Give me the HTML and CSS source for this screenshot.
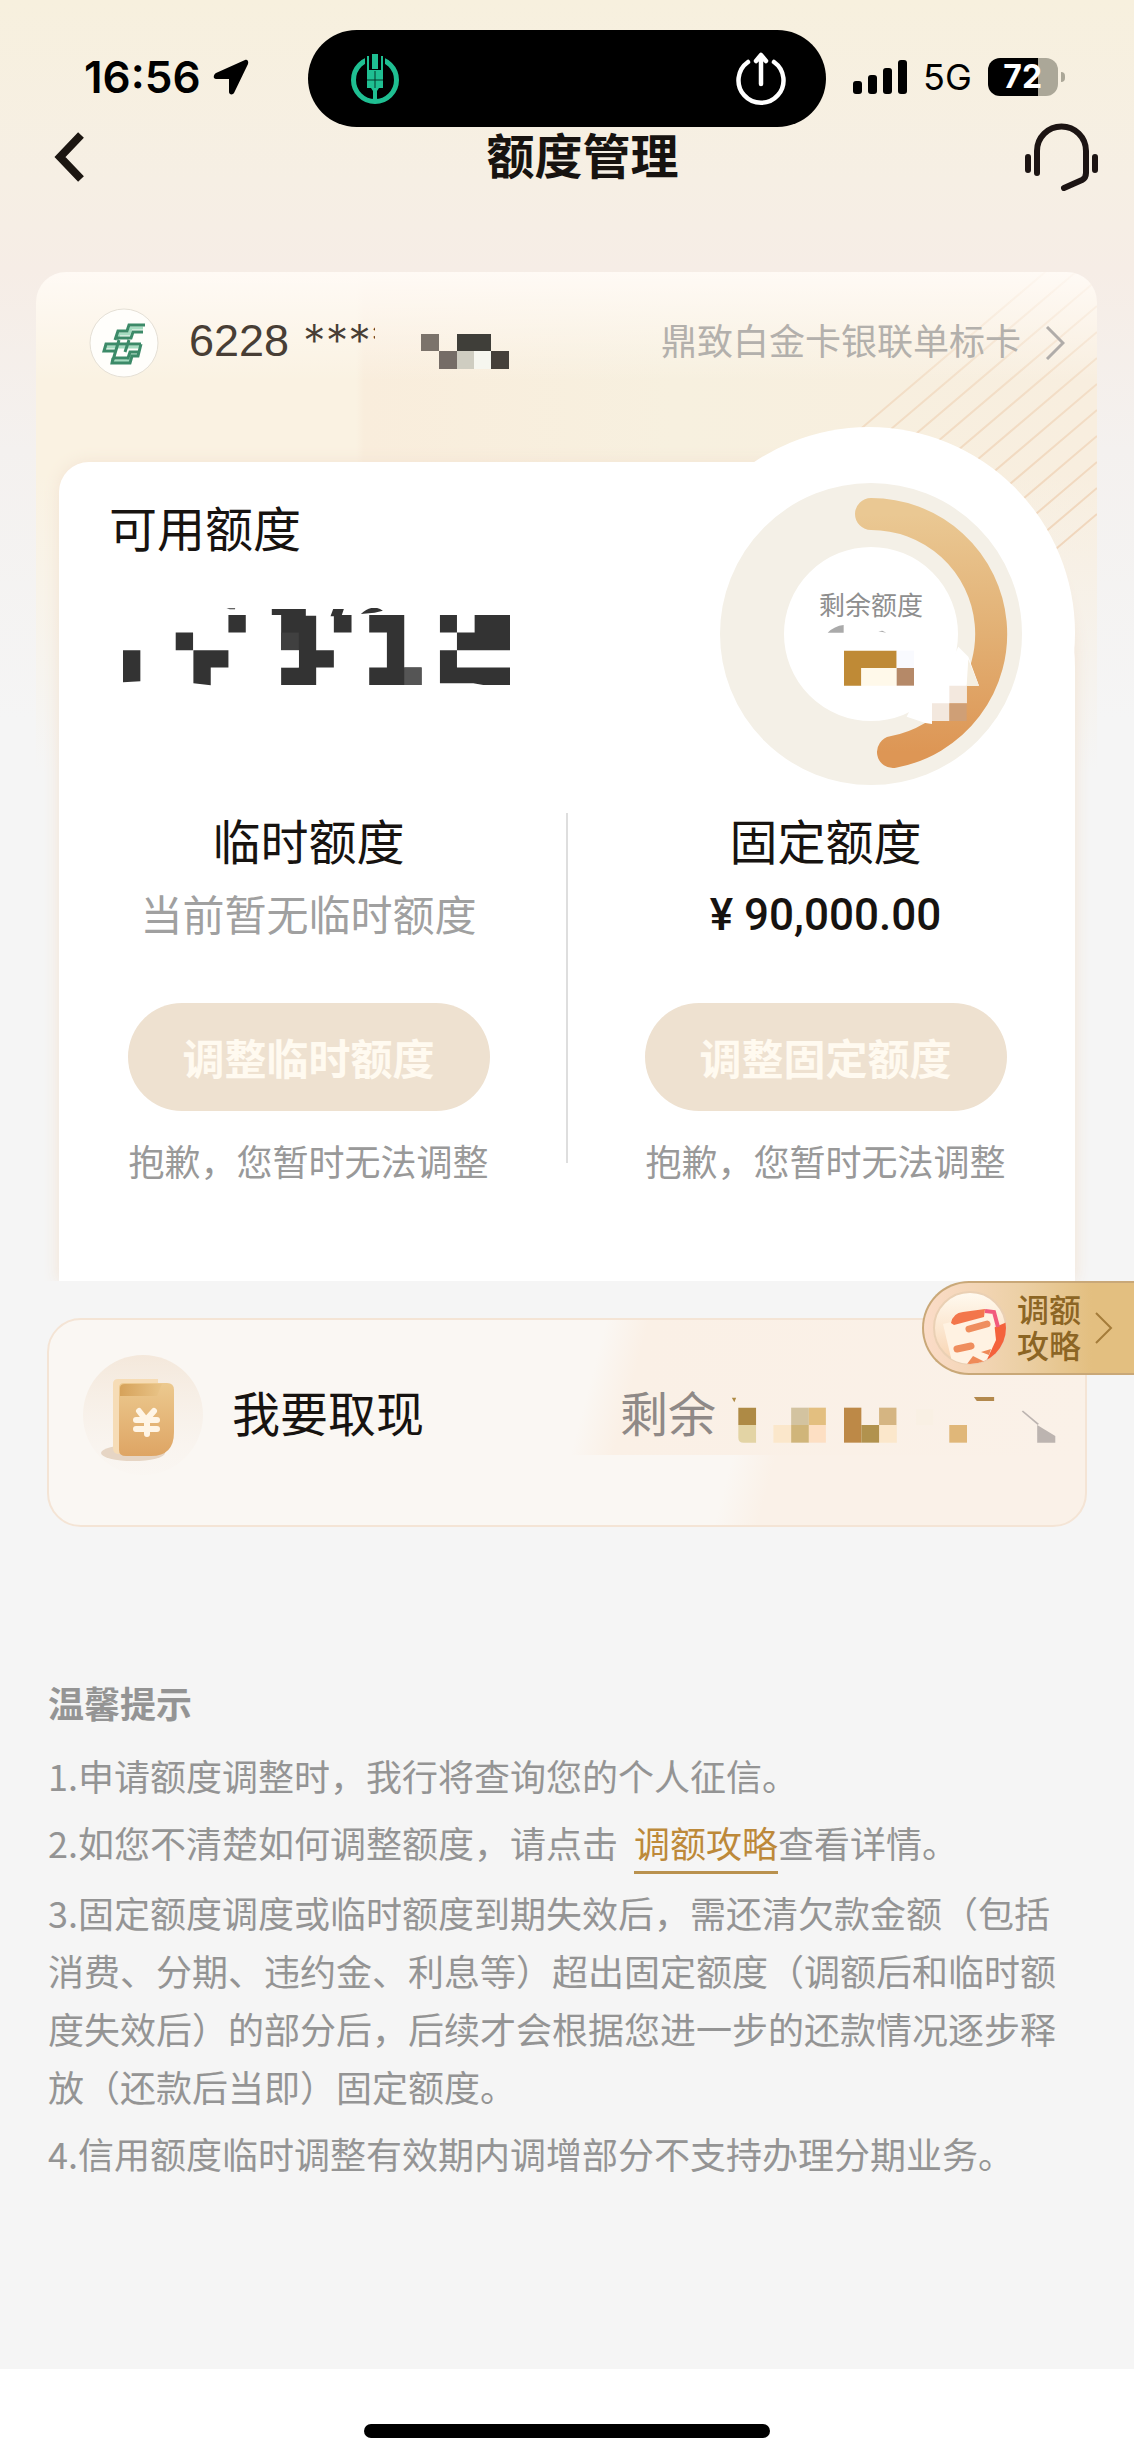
FILE: index.html
```html
<!DOCTYPE html>
<html lang="zh-CN">
<head>
<meta charset="utf-8">
<meta name="viewport" content="width=device-width, initial-scale=1">
<title>额度管理</title>
<link rel="stylesheet" href="styles.css">
</head>
<body>
<div class="status-bar">
  <div class="status-left">
    <span class="clock">16:56</span>
    <svg width="36" height="36" viewBox="0 0 36 36" aria-hidden="true"><path d="M32 1C34 0 36 2 35 5L21 34C20 36 16 36 16 33V20H3C0 20 0 16 3 14Z" fill="#000"/></svg>
  </div>
  <div class="island">
    <svg width="50" height="50" viewBox="0 0 50 50" aria-hidden="true">
      <circle cx="25" cy="26" r="21.500" fill="none" stroke="#1fbf92" stroke-width="5"/>
      <path d="M15 0h20v11H15z" fill="#000"/>
      <path d="M22 0h6v15h-6zM17 2h2v14h12V2h2v22H17zM17 27h16v7h-4l-2 3v10h-4V37l-2-3h-4z" fill="#1fbf92"/>
      <path d="M17 23h16v5H17z" fill="#1fbf92"/>
      <path d="M25 17v17M17 26h16" stroke="#04382a" stroke-width="1"/>
    </svg>
    <svg width="50" height="54" viewBox="0 0 50 54" fill="none" stroke="#fff" stroke-width="4.500" stroke-linecap="round" stroke-linejoin="round" aria-hidden="true">
      <path d="M12 10A22.500 22.500 0 1 0 38 10M25 32V4M20 9l5-6 5 6"/>
    </svg>
  </div>
  <div class="status-right">
    <svg width="54" height="34" viewBox="0 0 54 34" aria-hidden="true"><rect y="21" width="9" height="13" rx="3"/><rect x="15" y="15" width="9" height="19" rx="3"/><rect x="30" y="8" width="9" height="26" rx="3"/><rect x="45" width="9" height="34" rx="3"/></svg>
    <span class="network">5G</span>
    <span class="battery"><span class="battery-level">72</span></span>
  </div>
</div>

<header class="nav">
  <button class="nav-back" type="button" aria-label="返回">
    <svg width="30" height="50" viewBox="0 0 30 50" fill="none" stroke="#1c1611" stroke-width="8"><path d="M27 3L6 25l21 22"/></svg>
  </button>
  <h1 class="nav-title">额度管理</h1>
  <button class="nav-service" type="button" aria-label="客服">
    <svg width="73" height="68" viewBox="0 0 73 68" fill="none" stroke="#1c1413" stroke-width="6" stroke-linecap="round" stroke-linejoin="round"><path d="M12 50V28a24 24 0 0 1 49 0V50q0 5-4 7L39 65M3 34v13M70 34v13"/></svg>
  </button>
</header>

<main class="content">
  <section class="quota-card">
    <svg class="card-lines" width="280" height="300" viewBox="0 0 280 300" aria-hidden="true">
      <defs><linearGradient id="fade" x1="0" y1="0" x2="0" y2="300" gradientUnits="userSpaceOnUse"><stop offset="0" stop-color="#ecc9a8" stop-opacity=".05"/><stop offset=".4" stop-color="#ecc9a8" stop-opacity=".45"/><stop offset="1" stop-color="#ecc9a8" stop-opacity=".7"/></linearGradient></defs>
      <path d="M280-44L0 194M280-18L0 220M280 8L0 246M280 34L0 272M280 60L0 298M280 86L0 324M280 112L0 350M280 138L0 376M280 164L0 402M280 190L0 428M280 216L0 454M280 242L0 480" fill="none" stroke="url(#fade)" stroke-width="2"/>
    </svg>
    <div class="card-head">
      <svg width="70" height="70" viewBox="0 0 70 70" aria-hidden="true">
        <circle cx="35" cy="35" r="34" fill="#fffefb" stroke="#e5e0d6"/>
        <g fill="none" stroke="#a5dcc0" stroke-width="3">
          <path d="M54 20H42l-2 6H30l-2 6M51 39H17M48 47h-7l-2 6H24"/>
        </g>
        <g fill="none" stroke="#3c8a68" stroke-width="3">
          <path d="M56 17H40l-2 6H29l-3 9M54 24H44l-2 6H28M52 36H17l-2 7h12M30 32l-6 20M40 32l-4 12M52 36l-2 8h-9l-2 6H24M50 44l-1 4h-6l-2 7H23l1-5"/>
        </g>
      </svg>
      <p class="card-number">6228 <span class="stars">****</span></p>
      <svg class="number-mosaic" width="88" height="35" viewBox="0 0 88 35" aria-hidden="true"><path d="M0 0h18v17H0z" fill="#7b736b"/><path d="M18 17h18v18H18z" fill="#756c66"/><path d="M36 0h34v17H36z" fill="#3f3e39"/><path d="M36 17h17v18H36z" fill="#cfcdc1"/><path d="M53 17h17v18H53z" fill="#f6f6ef"/><path d="M70 17h18v18H70z" fill="#45403a"/></svg>
      <a class="product" href="#card"><span class="product-name">鼎致白金卡银联单标卡</span>
        <svg width="20" height="34" viewBox="0 0 20 34" fill="none" stroke="#b0aca9" stroke-width="3" aria-hidden="true"><path d="M2 1l16 16L2 33"/></svg>
      </a>
    </div>

    <div class="panel">
      <div class="overview">
        <div>
          <h2 class="quota-title">可用额度</h2>
          <svg class="amount-mosaic" width="387" height="78" viewBox="190 385 1160 235" preserveAspectRatio="none" role="img" aria-label="金额已遮挡">
            <path fill="#333" d="M190 512h52v94l-52 3zM348 459h52v53h106v52h-53v54l-52-6V512h-53zM506 406h52v53h-52zM500 386h26v3h-16zM636 388h102v20h31v104h53v52h-53v53H664v-53h53v-52h-53V406h-28zM820 388h32l-6 18h29v53h-53v-49h-10zM903 403q35-32 66-10l-25 6zM928 406h105v158h52v53H928v-53h53V459h-53zM1140 406h51v53h53v-53h106v106h-159v52h159v53h-80l-30-5h-100V512h51v-53h-51z"/>
            <path fill="#fff" d="M664 512h53v52h-53z"/>
            <path fill="#555" d="M1033 564h52v53h-52z"/><path fill="#404040" d="M664 459h53v53h-53z"/>
          </svg>
        </div>
        <figure class="donut">
          <svg width="302" height="302" viewBox="0 0 302 302" aria-hidden="true">
            <defs><linearGradient id="arc" x1="0" y1="0" x2="0" y2="1"><stop offset="0" stop-color="#eac893"/><stop offset=".5" stop-color="#e2b074"/><stop offset="1" stop-color="#dd9655"/></linearGradient></defs>
            <circle cx="151" cy="151" r="119" fill="none" stroke="#f4f0e7" stroke-width="64"/>
            <path d="M151 31A120 120 0 0 1 173 269" fill="none" stroke="url(#arc)" stroke-width="32" stroke-linecap="round"/>
            <g transform="translate(-40 -63) scale(.33333)">
              <path fill="#fff" d="M835 680l30 30 32 87h-37v53h-52v53h-52v9l-20-3-56-19 20-40 100-100z"/>
              <path fill="#f5efe2" d="M865 718l32 79h-37z"/><path fill="#f3e8de" d="M808 797h52v53h-52zM756 850h52v53h-52z"/><path fill="#cf9f76" d="M808 850h52v53h-52z"/>
              <path fill="#bf8a36" d="M492 692h158v52H544v53h-52z"/><path fill="#fff9ea" d="M544 744h106v53H544z"/><path fill="#f9fafe" d="M650 692h52v52h-52z"/><path fill="#b58968" d="M650 744h52v53h-52z"/>
              <path fill="#aaa" d="M443 638q20-20 48-23v23zM595 634l24 4-12-6z"/>
            </g>
          </svg>
          <figcaption>剩余额度</figcaption>
        </figure>
      </div>

      <div class="limits">
        <section class="limit">
          <h2 class="quota-title">临时额度</h2>
          <p class="limit-empty">当前暂无临时额度</p>
          <button class="adjust" type="button" disabled>调整临时额度</button>
          <p class="limit-note">抱歉，您暂时无法调整</p>
        </section>
        <div class="divider"></div>
        <section class="limit">
          <h2 class="quota-title">固定额度</h2>
          <p class="limit-amount">¥ 90,000.00</p>
          <button class="adjust" type="button" disabled>调整固定额度</button>
          <p class="limit-note">抱歉，您暂时无法调整</p>
        </section>
      </div>
    </div>
  </section>

  <section class="withdraw-area">
    <a class="withdraw" href="#withdraw">
      <svg width="120" height="120" viewBox="0 0 120 120" aria-hidden="true">
        <defs>
          <linearGradient id="halo" x1="0" y1="0" x2="0" y2="1"><stop offset="0" stop-color="#f4e8db"/><stop offset="1" stop-color="#f9f4ef" stop-opacity=".3"/></linearGradient>
          <linearGradient id="gold" x1="0" y1="0" x2="0" y2="1"><stop offset="0" stop-color="#ecc98f"/><stop offset="1" stop-color="#dea564"/></linearGradient>
          <linearGradient id="flap"><stop offset="0" stop-color="#d6a25a"/><stop offset="1" stop-color="#e9c488"/></linearGradient>
        </defs>
        <circle cx="60" cy="60" r="60" fill="url(#halo)"/>
        <ellipse cx="50" cy="98" rx="32" ry="8" fill="#e6d5c4"/>
        <path d="M30 29q0-5 5-5h40v75H36q-6 0-6-6z" fill="#f6dcb6"/>
        <path d="M36 33q0-5 5-5h43q7 0 7 7v42q0 24-23 24H43q-7 0-7-6z" fill="url(#gold)"/>
        <path d="M37 33q0-4 5-4h37l-5 12H37z" fill="url(#flap)"/>
        <path d="M56 56l7 9 8-9M53 65h21M53 74h21M64 65v14" fill="none" stroke="#fff5e6" stroke-width="6" stroke-linecap="round"/>
      </svg>
      <span class="withdraw-label">我要取现</span>
      <span class="withdraw-rest"><span class="rest-label">剩余</span>
        <svg width="330" height="60" viewBox="451 432 912 180" preserveAspectRatio="none" aria-hidden="true">
          <path fill="#ae8a45" d="M474 500h49v52h-49zM456 470h12l-5 14z"/><path fill="#e3d4a5" d="M474 552h49v53h-34q-15 0-15-15z"/>
          <path fill="#fbe7cb" d="M571 552h49v53h-49zM863 552h49v53h-49z"/><path fill="#d3c3a0" d="M620 500h49v52h-49z"/><path fill="#d0b57a" d="M620 552h49v53h-49z"/><path fill="#e3bf80" d="M669 500h47v52h-47z"/><path fill="#fddfc3" d="M669 552h47v53h-47z"/>
          <path fill="#bd8947" d="M766 500h48v105h-48z"/><path fill="#b1924e" d="M814 552h49v53h-49z"/><path fill="#d5b582" d="M863 500h48v52h-48z"/><path fill="#f9f0e4" d="M965 505h48v47h-48z"/><path fill="#e0b779" d="M1057 552h49v53h-49z"/>
          <path fill="#b3894d" d="M1125 468h56v12h-48z"/><path fill="#bcb4b0" d="M1300 552l50 33v20h-50z"/><path d="M1259 510l44 40" stroke="#bcb4b0" stroke-width="5"/>
        </svg>
      </span>
    </a>
    <a class="guide-tab" href="#guide">
      <svg width="74" height="76" viewBox="0 0 74 76" aria-hidden="true">
        <defs><clipPath id="disc"><circle cx="37" cy="38" r="36"/></clipPath><linearGradient id="discfill" x1="0" y1="0" x2="0" y2="1"><stop offset="0" stop-color="#fffaf0"/><stop offset="1" stop-color="#f8d3b0"/></linearGradient></defs>
        <circle cx="37" cy="38" r="36" fill="url(#discfill)" stroke="#ead0b4" stroke-width="2"/>
        <g clip-path="url(#disc)">
          <path d="M60 38l14-6v24L58 76H46z" fill="#f4623c"/>
          <path d="M10 34l50-12 3 28-12 26H20z" fill="#fff2e2"/>
          <path d="M18 33q2-10 12-11l22-3-1 8-30 8z" fill="#f3764b"/>
          <path d="M52 21l9 1 4 15" fill="none" stroke="#f2597d" stroke-width="4"/>
          <path d="M36 39l18-5M24 59l14-3" stroke="#ef8e5e" stroke-width="7" stroke-linecap="round"/>
          <path d="M34 74l6-8 16 8zM48 62l10-3-2 6z" fill="#ef8a58"/>
        </g>
      </svg>
      <span class="guide-text">调额<br>攻略</span>
      <svg width="18" height="32" viewBox="0 0 18 32" fill="none" stroke="#a47c3a" stroke-width="2" aria-hidden="true"><path d="M1 1l15 15L1 31"/></svg>
    </a>
  </section>

  <section class="tips">
    <h2 class="tips-title">温馨提示</h2>
    <p>1.申请额度调整时，我行将查询您的个人征信。</p>
    <p>2.如您不清楚如何调整额度，请点击 <a class="tips-link" href="#guide">调额攻略</a>查看详情。</p>
    <p>3.固定额度调度或临时额度到期失效后，需还清欠款金额（包括消费、分期、违约金、利息等）超出固定额度（调额后和临时额度失效后）的部分后，后续才会根据您进一步的还款情况逐步释放（还款后当即）固定额度。</p>
    <p>4.信用额度临时调整有效期内调增部分不支持办理分期业务。</p>
  </section>
</main>

<footer class="home-area"><div class="home-bar"></div></footer>
</body>
</html>
```
FILE: styles.css
```css
* { box-sizing: border-box; }

body {
  margin: 0;
  min-height: 100vh;
  display: flex;
  flex-direction: column;
  font-family: "Noto Sans CJK SC", sans-serif;
  font-size: 36px;
  line-height: 58px;
  color: #171310;
  background: linear-gradient(#f7f0de 0, #f6efe4 180px, #f6ede6 270px, #f4f1ef 450px, #f5f5f5 720px);
}

h1, h2, p, figure { margin: 0; font-weight: 400; }
button { border: 0; padding: 0; background: none; font: inherit; color: inherit; }
a { color: inherit; text-decoration: none; }
svg { display: block; flex: none; }

/* Phone status bar */
.status-bar {
  display: grid;
  grid-template-columns: 1fr 518px 1fr;
  align-items: center;
  padding-top: 30px;
  font-family: Inter, sans-serif;
  color: #000;
}
.status-left { display: flex; align-items: center; gap: 12px; padding-left: 84px; }
.clock { font-size: 44px; font-weight: 600; }
.island {
  display: flex;
  align-items: center;
  justify-content: space-between;
  height: 97px;
  padding: 0 40px 0 42px;
  border-radius: 49px;
  background: #000;
}
.status-left, .status-right { padding-bottom: 3px; }
.status-right { display: flex; align-items: center; gap: 16px; padding-left: 27px; }
.network { font-size: 36px; }
.battery { position: relative; }
.battery::after {
  content: "";
  position: absolute;
  right: -7px;
  top: 14px;
  width: 4px;
  height: 10px;
  border-radius: 0 4px 4px 0;
  background: #aba798;
}
.battery-level {
  display: block;
  width: 70px;
  border-radius: 12px;
  background: linear-gradient(90deg, #000 72%, #aba798 72%);
  color: #fff;
  font-size: 32px;
  font-weight: 700;
  line-height: 38px;
  text-align: center;
}

/* Title bar */
.nav { display: flex; align-items: center; height: 60px; padding: 0 36px 0 54px; }
.nav-back { width: 86px; }
.nav-title { flex: 1; padding-bottom: 8px; font-size: 48px; font-weight: 700; text-align: center; }

.content { flex: 1; background: linear-gradient(#f5f5f500 500px, #f5f5f5 600px); }

/* Card with the quota panel */
.quota-card {
  position: relative;
  margin: 85px 37px 0 36px;
  border-radius: 30px 30px 0 0;
  background:
    linear-gradient(#f5f5f500 200px, #f5f5f5 500px),
    linear-gradient(#fffaf5 0, #fffaf500 110px),
    linear-gradient(90deg, #faf2e2 320px, #f9eddc 328px, #f7f0df 60%, #f8eedf);
}
.card-lines { position: absolute; top: 0; right: 0; border-radius: 0 30px 0 0; }
.card-head { position: relative; display: flex; align-items: center; padding: 36px 32px 0 53px; }
.card-number {
  display: flex;
  margin-left: 30px;
  padding-bottom: 4px;
  font-family: "Liberation Sans", sans-serif;
  font-size: 45px;
  color: #483e35;
}
.stars { width: 72px; margin-left: 14px; overflow: hidden; font-family: Inter, sans-serif; font-weight: 300; }
.number-mosaic { margin: 16px 0 0 46px; }
.product { display: flex; align-items: center; gap: 24px; margin-left: auto; color: #b3b0ac; }
.product-name { padding-bottom: 8px; }

.panel {
  position: relative;
  margin: 84px 22px 0 23px;
  padding: 21px 0 99px;
  border-radius: 30px 206px 0 0;
  background: #fff;
  box-shadow: 0 0 16px #f3e3d3;
  clip-path: inset(-60px -22px 0 -23px);
}
.panel::before {
  content: "";
  position: absolute;
  top: -35px;
  right: 0;
  width: 412px;
  height: 412px;
  border-radius: 50%;
  background: #fff;
}
.overview { position: relative; display: flex; justify-content: space-between; padding: 0 53px 0 50px; }
.quota-title { font-size: 48px; }
.overview .quota-title { margin-top: 14px; }
.amount-mosaic { margin: 53px 0 0 14px; }
.donut { display: grid; place-items: center; }
.donut > * { grid-area: 1 / 1; }
.donut figcaption { padding-bottom: 60px; font-size: 26px; line-height: 32px; color: #8e8e8e; }

.limits { position: relative; display: grid; grid-template-columns: 1fr 18px 1fr; margin-top: 28px; }
.divider { justify-self: center; width: 2px; margin-bottom: 19px; background: #dedede; }
.limit { display: flex; flex-direction: column; align-items: center; }
.limit .quota-title { margin-top: -3px; }
.limit-empty, .limit-amount { margin-top: 16px; font-size: 42px; }
.limit-empty { color: #a0a0a0; }
.limit-amount { padding-top: 4px; line-height: 54px; font-family: Roboto, sans-serif; font-size: 44px; font-weight: 500; }
.adjust {
  width: 362px;
  height: 108px;
  margin: 61px 0 27px;
  border-radius: 54px;
  background: #eee1d0;
  color: #fffaf0;
  font-size: 42px;
  font-weight: 700;
}
.limit-note { line-height: 44px; color: #999; }

/* Cash withdrawal */
.withdraw-area { position: relative; padding: 37px 47px 0; background: #f5f5f5; }
.withdraw {
  display: flex;
  align-items: center;
  padding: 35px 25px 50px 34px;
  border: 2px solid #f4e4d5;
  border-radius: 34px;
  background:
    linear-gradient(105deg, #f8f0e800 52%, #faf0e6 56%, #faf1e8 100%) 0 0 / 100% 135px no-repeat,
    linear-gradient(105deg, #faf7f3 66%, #faf1e8 70%);
  font-size: 48px;
}
.withdraw-label { margin-left: 29px; padding-bottom: 8px; }
.withdraw-rest { display: flex; gap: 14px; margin-left: auto; color: #8f8987; }
.rest-label { padding-bottom: 8px; line-height: 52px; }
.guide-tab {
  position: absolute;
  top: 0;
  right: 0;
  display: flex;
  align-items: center;
  padding: 7px 21px 7px 9px;
  border: 2px solid #c9a878;
  border-right: 0;
  border-radius: 47px 0 0 47px;
  background: linear-gradient(90deg, #fbdcc8, #ecd0a6 45%, #e3bf80 80%);
}
.guide-text { margin: 0 14px 4px 10px; font-size: 32px; font-weight: 500; line-height: 36px; color: #8c6524; }

/* Notes */
.tips { padding: 146px 56px 0 48px; color: #949494; background: #f5f5f5; }
.tips-title { margin-bottom: 15px; font-size: 36px; font-weight: 700; }
.tips p { margin-bottom: 9px; }
.tips-link { display: inline-block; margin-left: 8px; border-bottom: 3px solid #b9914e; color: #bd893a; }

.home-area { padding: 55px 0 21px; background: #fff; }
.home-bar { width: 406px; height: 14px; margin: 0 auto; border-radius: 7px; background: #000; }
```
